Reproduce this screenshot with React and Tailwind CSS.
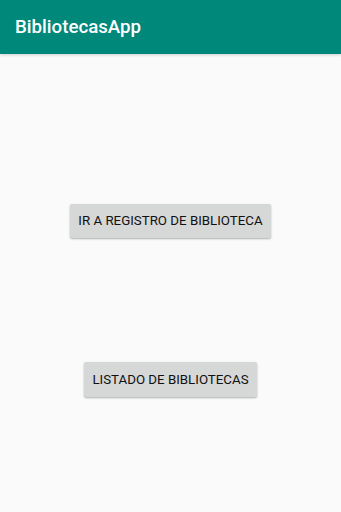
export default function App() {
  return (
    <div className="w-[341px] h-[512px] bg-[#fafafa] flex flex-col overflow-hidden" style={{ fontFamily: 'Roboto, "Liberation Sans", sans-serif' }}>
      {/* App bar */}
      <div className="h-[54px] bg-[#00887a] flex items-center px-[15px] shadow-[0_1px_3px_rgba(0,0,0,0.18)] z-10">
        <h1 className="text-white text-[18.7px] font-medium">BibliotecasApp</h1>
      </div>

      <div className="flex flex-col items-center">
        <button className="mt-[150px] w-[201px] h-[34px] bg-[#d6d7d7] rounded-[2px] shadow-[0_1px_2px_rgba(0,0,0,0.3)] text-[13.3px] text-[#111] uppercase">
          Ir a registro de biblioteca
        </button>
        <button className="mt-[124px] w-[173px] h-[35px] bg-[#d6d7d7] rounded-[2px] shadow-[0_1px_2px_rgba(0,0,0,0.3)] text-[13.3px] text-[#111] uppercase">
          Listado de bibliotecas
        </button>
      </div>
    </div>
  );
}
